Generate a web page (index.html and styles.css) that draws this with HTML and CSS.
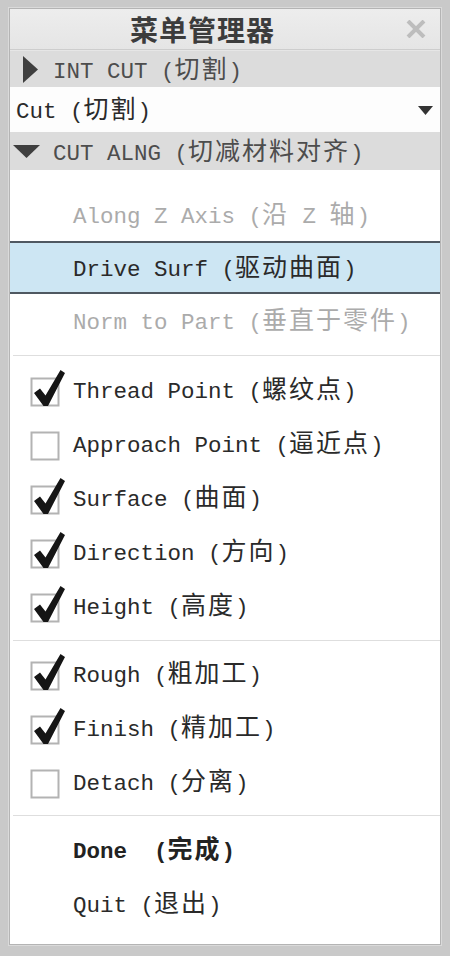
FILE: index.html
```html
<!DOCTYPE html>
<html lang="zh">
<head>
<meta charset="utf-8">
<title>菜单管理器</title>
<link rel="stylesheet" href="styles.css">
</head>
<body>
<div class="panel">
  <div class="titlebar">
    <span class="title">菜单管理器</span>
    <svg class="close" width="20" height="18" viewBox="0 0 20 18"><path d="M2 1 L18 17 M18 1 L2 17" stroke="#bdbdbd" stroke-width="4" fill="none"/></svg>
  </div>
  <div class="hdr hdr-int">
    <svg class="tri-right" width="15" height="27" viewBox="0 0 15 27"><path d="M0 0 L15 13.5 L0 27 Z" fill="#3f3f3f"/></svg>
    <span class="t hdr-text">INT CUT (<span class="zh">切割</span>)</span>
  </div>
  <div class="cutrow">
    <span class="t">Cut (<span class="zh">切割</span>)</span>
    <svg class="dd" width="15" height="9" viewBox="0 0 15 9"><path d="M0 0 L15 0 L7.5 9 Z" fill="#333"/></svg>
  </div>
  <div class="hdr hdr-alng">
    <svg class="tri-down" width="27" height="13" viewBox="0 0 27 13"><path d="M0 0 L27 0 L13.5 13 Z" fill="#3f3f3f"/></svg>
    <span class="t hdr-text">CUT ALNG (<span class="zh">切减材料对齐</span>)</span>
  </div>
  <div class="list">
    <div class="group g1">
      <div class="row plain dis"><span class="t">Along Z Axis (<span class="zh">沿</span> Z <span class="zh">轴</span>)</span></div>
      <div class="row plain sel"><span class="t">Drive Surf (<span class="zh">驱动曲面</span>)</span></div>
      <div class="row plain dis"><span class="t">Norm to Part (<span class="zh">垂直于零件</span>)</span></div>
    </div>
    <div class="sep"></div>
    <div class="group g2">
      <div class="row cb">
        <svg class="box" width="36" height="40" viewBox="0 0 36 40"><rect x="1.5" y="9.5" width="27" height="27" fill="#fff" stroke="#b3b3b3" stroke-width="2"/><path d="M4 24 L10 19.5 L15.5 26.5 L30.5 1 L35 4 L18 37 L13.5 37 Z" fill="#151515"/></svg>
        <span class="t">Thread Point (<span class="zh">螺纹点</span>)</span>
      </div>
      <div class="row cb">
        <svg class="box" width="36" height="40" viewBox="0 0 36 40"><rect x="1.5" y="9.5" width="27" height="27" fill="#fff" stroke="#b3b3b3" stroke-width="2"/></svg>
        <span class="t">Approach Point (<span class="zh">逼近点</span>)</span>
      </div>
      <div class="row cb">
        <svg class="box" width="36" height="40" viewBox="0 0 36 40"><rect x="1.5" y="9.5" width="27" height="27" fill="#fff" stroke="#b3b3b3" stroke-width="2"/><path d="M4 24 L10 19.5 L15.5 26.5 L30.5 1 L35 4 L18 37 L13.5 37 Z" fill="#151515"/></svg>
        <span class="t">Surface (<span class="zh">曲面</span>)</span>
      </div>
      <div class="row cb">
        <svg class="box" width="36" height="40" viewBox="0 0 36 40"><rect x="1.5" y="9.5" width="27" height="27" fill="#fff" stroke="#b3b3b3" stroke-width="2"/><path d="M4 24 L10 19.5 L15.5 26.5 L30.5 1 L35 4 L18 37 L13.5 37 Z" fill="#151515"/></svg>
        <span class="t">Direction (<span class="zh">方向</span>)</span>
      </div>
      <div class="row cb">
        <svg class="box" width="36" height="40" viewBox="0 0 36 40"><rect x="1.5" y="9.5" width="27" height="27" fill="#fff" stroke="#b3b3b3" stroke-width="2"/><path d="M4 24 L10 19.5 L15.5 26.5 L30.5 1 L35 4 L18 37 L13.5 37 Z" fill="#151515"/></svg>
        <span class="t">Height (<span class="zh">高度</span>)</span>
      </div>
    </div>
    <div class="sep"></div>
    <div class="group g3">
      <div class="row cb">
        <svg class="box" width="36" height="40" viewBox="0 0 36 40"><rect x="1.5" y="9.5" width="27" height="27" fill="#fff" stroke="#b3b3b3" stroke-width="2"/><path d="M4 24 L10 19.5 L15.5 26.5 L30.5 1 L35 4 L18 37 L13.5 37 Z" fill="#151515"/></svg>
        <span class="t">Rough (<span class="zh">粗加工</span>)</span>
      </div>
      <div class="row cb">
        <svg class="box" width="36" height="40" viewBox="0 0 36 40"><rect x="1.5" y="9.5" width="27" height="27" fill="#fff" stroke="#b3b3b3" stroke-width="2"/><path d="M4 24 L10 19.5 L15.5 26.5 L30.5 1 L35 4 L18 37 L13.5 37 Z" fill="#151515"/></svg>
        <span class="t">Finish (<span class="zh">精加工</span>)</span>
      </div>
      <div class="row cb">
        <svg class="box" width="36" height="40" viewBox="0 0 36 40"><rect x="1.5" y="9.5" width="27" height="27" fill="#fff" stroke="#b3b3b3" stroke-width="2"/></svg>
        <span class="t">Detach (<span class="zh">分离</span>)</span>
      </div>
    </div>
    <div class="sep"></div>
    <div class="group g4">
      <div class="row plain"><span class="t bold">Done  (<span class="zh">完成</span>)</span></div>
      <div class="row plain"><span class="t">Quit (<span class="zh">退出</span>)</span></div>
    </div>
  </div>
</div>
</body>
</html>
```

FILE: styles.css
```css
* { box-sizing: border-box; }
html, body { margin: 0; }
body {
  width: 450px;
  height: 956px;
  background: #c9c9c9;
  padding: 8px 9px 11px 9px;
  overflow: hidden;
}
.panel {
  height: 100%;
  display: flex;
  flex-direction: column;
  background: #fff;
  border: 1px solid #b4b4b4;
  box-shadow: 0 0 0 1px #dadada;
}
.t {
  font-family: "Liberation Mono", monospace;
  font-size: 22.5px;
  line-height: 1;
  color: #2a2a2a;
  white-space: pre;
}
.zh {
  font-family: "Noto Sans CJK SC", sans-serif;
  font-size: 25px;
  letter-spacing: 2px;
}
.bold { font-weight: bold; color: #222; }

.titlebar {
  height: 41px;
  flex: none;
  display: flex;
  align-items: center;
  justify-content: space-between;
  padding: 0 14px 0 120px;
  background: linear-gradient(#ededed, #e5e5e5);
  border-bottom: 1px solid #cdcdcd;
}
.title {
  font-family: "Noto Sans CJK SC", sans-serif;
  font-weight: bold;
  font-size: 28px;
  letter-spacing: 1px;
  color: #3c3c3c;
  line-height: 1;
}
.close { display: block; }

.hdr {
  flex: none;
  display: flex;
  align-items: center;
  background: #dcdcdc;
}
.hdr-text { color: #4d4d4d; }
.hdr-int {
  height: 37px;
  padding-left: 13px;
  gap: 15px;
  border-top: 1px solid #e6e6e6;
}
.hdr-alng {
  height: 38px;
  padding-left: 3px;
  gap: 13px;
}
.tri-right, .tri-down { display: block; }

.cutrow {
  flex: none;
  height: 45px;
  display: flex;
  align-items: center;
  justify-content: space-between;
  padding: 0 7px 0 6px;
  background: #fdfdfd;
}
.dd { display: block; margin-top: 2px; }

.list {
  flex: 1;
  display: flex;
  flex-direction: column;
}
.group { display: flex; flex-direction: column; }
.g1 { padding: 18px 0 8px; }
.g2 { padding: 6px 0 8px; }
.g3 { padding: 5px 0 7px; }
.g4 { padding: 6px 0 0; }

.sep {
  height: 1px;
  margin-left: 3px;
  background: #dedede;
  flex: none;
}

.row {
  height: 53px;
  display: flex;
  align-items: center;
}
.g2 .row, .g3 .row, .g4 .row { height: 54px; }
.row.plain { padding-left: 63px; }
.row.cb { padding-left: 20px; gap: 7px; }
.box { display: block; flex: none; }
.row.dis .t { color: #ababab; }
.row.sel {
  background: #cde6f3;
  border-top: 2px solid #4f5861;
  border-bottom: 2px solid #4f5861;
}
```
